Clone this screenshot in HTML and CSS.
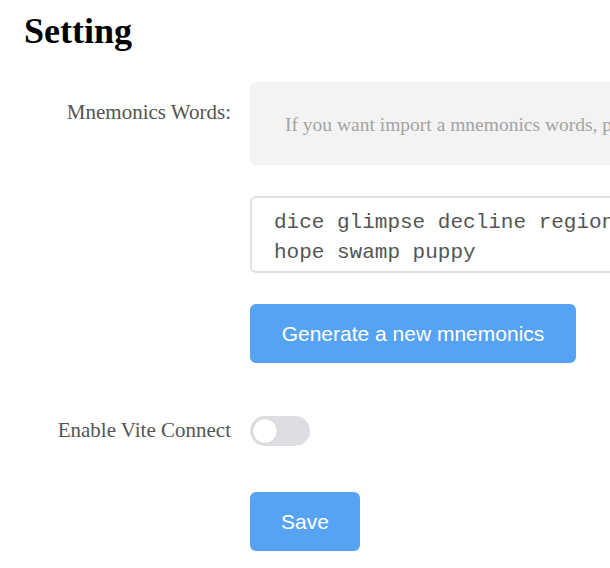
FILE: index.html
```html
<!DOCTYPE html>
<html>
<head>
<meta charset="utf-8">
<link rel="stylesheet" href="styles.css">
</head>
<body>
<div class="page">
  <h1 class="title">Setting</h1>
  <div class="row">
    <div class="label label-top">Mnemonics Words:</div>
    <div class="control">
      <div class="import-box">If you want import a mnemonics words, please paste them here</div>
      <div class="words">dice glimpse decline region<br>hope swamp puppy</div>
      <button class="btn btn-generate">Generate a new mnemonics</button>
    </div>
  </div>
  <div class="row row-toggle">
    <div class="label label-toggle">Enable Vite Connect</div>
    <div class="control">
      <div class="switch"><span class="knob"></span></div>
    </div>
  </div>
  <div class="row row-save">
    <div class="label"></div>
    <div class="control">
      <button class="btn btn-save">Save</button>
    </div>
  </div>
</div>
</body>
</html>
```
FILE: styles.css
```css
html, body {
  margin: 0;
  padding: 0;
  background: #fff;
  overflow: hidden;
}
.page {
  padding: 0 24px;
  width: 900px;
  font-family: "Liberation Serif", serif;
}
.title {
  margin: 11px 0 0 0;
  font-size: 36px;
  font-weight: bold;
  line-height: 40px;
  color: #000;
}
.row {
  display: flex;
  align-items: flex-start;
  gap: 19px;
}
.title + .row {
  margin-top: 31px;
}
.label {
  width: 207px;
  flex: none;
  text-align: right;
  font-size: 21px;
  line-height: 30px;
  color: #555;
  white-space: nowrap;
}
.label-top {
  padding-top: 15px;
}
.control {
  display: flex;
  flex-direction: column;
  align-items: flex-start;
}
.import-box {
  width: 600px;
  height: 83px;
  box-sizing: border-box;
  background: #f3f3f3;
  border-radius: 6px;
  padding: 28px 35px 0;
  font-size: 19.5px;
  line-height: 30px;
  color: #a3a3a3;
  white-space: nowrap;
  overflow: hidden;
}
.words {
  margin-top: 31px;
  width: 600px;
  height: 77px;
  box-sizing: border-box;
  border: 2px solid #dfe0e4;
  border-radius: 6px;
  padding: 10px 22px 0;
  font-family: "Liberation Mono", monospace;
  font-size: 21px;
  line-height: 30px;
  color: #555;
  white-space: nowrap;
  overflow: hidden;
}
.btn {
  border: none;
  background: #57a3f3;
  color: #fff;
  font-family: "Liberation Sans", sans-serif;
  font-size: 21px;
  height: 59px;
  border-radius: 6px;
  padding: 1px 0 0;
  cursor: pointer;
}
.btn-generate {
  margin-top: 31px;
  width: 326px;
}
.btn-save {
  width: 110px;
}
.row-toggle {
  margin-top: 53px;
}
.label-toggle {
  line-height: 26px;
  padding-top: 1px;
}
.switch {
  position: relative;
  width: 60px;
  height: 30px;
  border-radius: 15px;
  background: #dcdee2;
}
.knob {
  position: absolute;
  left: 3px;
  top: 3px;
  width: 24px;
  height: 24px;
  border-radius: 50%;
  background: #fff;
  box-shadow: 0 0 1px rgba(0,0,0,0.25);
}
.row-save {
  margin-top: 46px;
}
```
